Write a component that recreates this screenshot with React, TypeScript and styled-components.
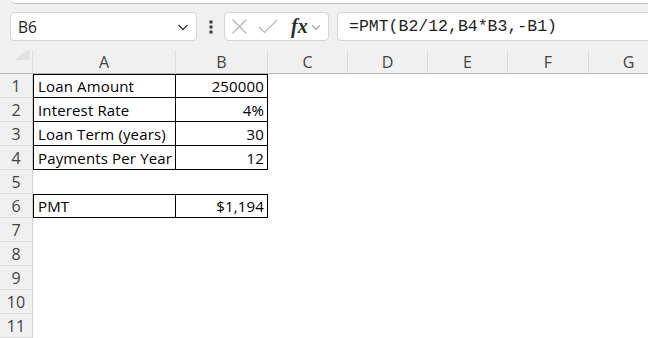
import { Fragment } from "react";
import styled, { createGlobalStyle } from "styled-components";

const GlobalStyle = createGlobalStyle`
  html, body {
    margin: 0;
    padding: 0;
    background: #f0f0f0;
  }
`;

const Window = styled.div`
  width: 648px;
  height: 338px;
  overflow: hidden;
  background: #f0f0f0;
  font-family: "Open Sans", "Liberation Sans", sans-serif;
`;

const RibbonEdge = styled.div`
  height: 3px;
  margin-left: 12px;
  background: #ffffff;
  border-bottom-left-radius: 6px;
  box-shadow: 0 1px 1px rgba(0, 0, 0, 0.18);
`;

const FormulaBar = styled.div`
  display: flex;
  align-items: center;
  height: 47px;
  padding: 0 0 0 10px;
  box-sizing: border-box;
`;

const Box = styled.div<{ $width?: number }>`
  display: flex;
  align-items: center;
  height: 29px;
  box-sizing: border-box;
  background: #ffffff;
  border: 1px solid #d6d6d6;
  border-radius: 4px;
  ${(p) => (p.$width ? `width: ${p.$width}px;` : "flex: 1;")}
`;

const NameBox = styled(Box)`
  padding: 0 6px 0 7px;
  font-size: 15.5px;
  color: #1f1f1f;
  justify-content: space-between;
`;

const FxBox = styled(Box)`
  padding: 0 6px 0 6px;
  gap: 10px;
  margin-right: 8px;
`;

const FormulaBox = styled(Box)`
  padding: 0 0 0 11px;
  border-right: none;
  border-top-right-radius: 0;
  border-bottom-right-radius: 0;
  font-family: "Liberation Mono", monospace;
  font-size: 16.5px;
  color: #1f1f1f;
`;

const Dots = styled.div`
  width: 27px;
  display: flex;
  justify-content: center;
`;

const Fx = styled.span`
  font-family: "Liberation Serif", serif;
  font-style: italic;
  font-weight: bold;
  font-size: 20px;
  color: #2b2b2b;
  display: flex;
  align-items: center;
  gap: 2px;
  margin-left: 3px;
`;

const Sheet = styled.div`
  display: grid;
  grid-template-columns: 33px 143px 92px 80px 80px 80px 81px 80px;
  grid-auto-rows: 24px;
`;

const Corner = styled.div`
  border-bottom: 1px solid #b8b8b8;
  border-right: 1px solid #dcdcdc;
  box-sizing: border-box;
`;

const ColHead = styled.div`
  display: flex;
  align-items: center;
  justify-content: center;
  box-sizing: border-box;
  border-bottom: 1px solid #b8b8b8;
  border-right: 1px solid #dcdcdc;
  font-size: 16px;
  color: #444444;
  padding-top: 1px;
`;

const RowHead = styled.div`
  display: flex;
  align-items: center;
  justify-content: center;
  box-sizing: border-box;
  border-bottom: 1px solid #dcdcdc;
  border-right: 1px solid #d0d0d0;
  font-size: 16px;
  color: #444444;
`;

const Cell = styled.div<{ $boxed?: boolean; $first?: boolean; $top?: boolean; $right?: boolean }>`
  display: flex;
  align-items: center;
  justify-content: ${(p) => (p.$right ? "flex-end" : "flex-start")};
  box-sizing: border-box;
  background: #ffffff;
  padding: 0 3px 0 4px;
  font-size: 15px;
  letter-spacing: 0.15px;
  color: #000000;
  white-space: nowrap;
  border-right: 1px solid ${(p) => (p.$boxed ? "#000000" : "#ffffff")};
  border-bottom: 1px solid ${(p) => (p.$boxed ? "#000000" : "#ffffff")};
  ${(p) => (p.$boxed && p.$first ? "border-left: 1px solid #000000;" : "")}
  ${(p) => (p.$boxed && p.$top ? "border-top: 1px solid #000000;" : "")}
`;

const Chevron = ({ color = "#333333", size = 14 }: { color?: string; size?: number }) => (
  <svg width={size} height={size} viewBox="0 0 14 14">
    <path d="M2.5 5 L7 9.5 L11.5 5" fill="none" stroke={color} strokeWidth="1.3" />
  </svg>
);

const columns = ["A", "B", "C", "D", "E", "F", "G"];

type Row = { label?: string; value?: string; boxed?: boolean; top?: boolean };

const rows: Row[] = [
  { label: "Loan Amount", value: "250000", boxed: true, top: true },
  { label: "Interest Rate", value: "4%", boxed: true },
  { label: "Loan Term (years)", value: "30", boxed: true },
  { label: "Payments Per Year", value: "12", boxed: true },
  {},
  { label: "PMT", value: "$1,194", boxed: true, top: true },
  {},
  {},
  {},
  {},
  {},
];

export default function App() {
  return (
    <Window>
      <GlobalStyle />
      <RibbonEdge />
      <FormulaBar>
        <NameBox $width={187}>
          <span>B6</span>
          <Chevron />
        </NameBox>
        <Dots>
          <svg width="4" height="14" viewBox="0 0 4 14">
            <rect x="0.5" y="0.5" width="3" height="3" fill="#3a3a3a" />
            <rect x="0.5" y="5.5" width="3" height="3" fill="#3a3a3a" />
            <rect x="0.5" y="10.5" width="3" height="3" fill="#3a3a3a" />
          </svg>
        </Dots>
        <FxBox $width={105}>
          <svg width="17" height="17" viewBox="0 0 17 17">
            <path d="M1.5 1.5 L15.5 15.5 M15.5 1.5 L1.5 15.5" stroke="#b4b4b4" strokeWidth="1.2" fill="none" />
          </svg>
          <svg width="20" height="17" viewBox="0 0 20 17">
            <path d="M1 9 L6.5 14.5 L19 2" stroke="#b4b4b4" strokeWidth="1.2" fill="none" />
          </svg>
          <Fx>
            fx
            <Chevron color="#9a9a9a" size={12} />
          </Fx>
        </FxBox>
        <FormulaBox>=PMT(B2/12,B4*B3,-B1)</FormulaBox>
      </FormulaBar>
      <Sheet>
        <Corner>
          <svg width="32" height="23" viewBox="0 0 32 23" style={{ display: "block" }}>
            <polygon points="30,-2 30,10 14,10" fill="#e2e2e2" />
          </svg>
        </Corner>
        {columns.map((c) => (
          <ColHead key={c}>{c}</ColHead>
        ))}
        {rows.map((r, i) => (
          <Fragment key={i}>
            <RowHead>{i + 1}</RowHead>
            <Cell $boxed={r.boxed} $first $top={r.top}>
              {r.label}
            </Cell>
            <Cell $boxed={r.boxed} $top={r.top} $right>
              {r.value}
            </Cell>
            {columns.slice(2).map((c) => (
              <Cell key={c} />
            ))}
          </Fragment>
        ))}
      </Sheet>
    </Window>
  );
}
